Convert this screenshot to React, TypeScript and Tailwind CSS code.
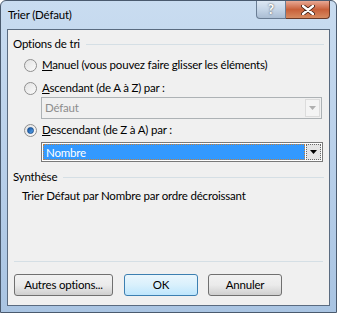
import React from "react";

function Radio({ checked }: { checked?: boolean }) {
  return (
    <span className="relative w-[13px] h-[13px] rounded-full border border-[#8f8f8f] bg-gradient-to-br from-[#e2e2e2] to-[#fbfbfb] flex items-center justify-center shrink-0">
      {checked && <span className="w-[7px] h-[7px] rounded-full bg-gradient-to-br from-[#0f4e9b] to-[#5aa8f0] border border-[#1b4f8f]" />}
    </span>
  );
}

function Btn({ children, primary }: { children: React.ReactNode; primary?: boolean }) {
  return (
    <div
      className={
        "h-[22px] flex items-center justify-center rounded-[3px] border " +
        (primary
          ? "border-[#3c7fb1] bg-gradient-to-b from-[#eaf6fd] via-[#d9f0fc] to-[#bee6fd]"
          : "border-[#707070] bg-gradient-to-b from-[#f2f2f2] via-[#ebebeb] to-[#cfcfcf]")
      }
    >
      {children}
    </div>
  );
}

export default function App() {
  return (
    <div
      className="w-[337px] h-[313px] relative overflow-hidden text-[11.5px] tracking-[-0.2px] text-black"
      style={{ fontFamily: 'Lato, "Noto Sans", sans-serif' }}
    >
      <div className="absolute inset-0 rounded-t-[6px] border border-[#4a5a6e] bg-gradient-to-b from-[#c9dcf0] via-[#b9d0ea] to-[#a9c4e2] flex flex-col">
        {/* title bar */}
        <div className="h-[28px] flex items-start">
          <span className="ml-[7px] mt-[6px] leading-[16px] text-black">Trier (Défaut)</span>
          <div className="ml-auto mr-[6px] flex">
            <div className="w-[30px] h-[18px] border border-[#6a7d94] border-t-0 rounded-bl-[4px] bg-gradient-to-b from-[#dce7f3] via-[#c5d5e7] to-[#aabdd3] flex items-center justify-center text-white font-bold text-[13px] leading-none" style={{ textShadow: "0 0 2px #333" }}>
              ?
            </div>
            <div className="w-[44px] h-[18px] border border-[#6a3a28] border-t-0 border-l-0 rounded-br-[4px] bg-gradient-to-b from-[#e8a894] via-[#c8603a] to-[#d68a60] flex items-center justify-center">
              <svg width="14" height="10" viewBox="0 0 14 10">
                <path d="M2 1 L12 9 M12 1 L2 9" stroke="#3a1a10" strokeWidth="4" strokeLinecap="round" />
                <path d="M2 1 L12 9 M12 1 L2 9" stroke="#fff" strokeWidth="2.4" strokeLinecap="round" />
              </svg>
            </div>
          </div>
        </div>
        {/* client */}
        <div className="mx-[6px] mb-[6px] flex-1 bg-[#f0f0f0] border border-[#5a6b80] flex flex-col px-[5px]">
          <div className="flex items-center mt-[6px] h-[16px]">
            <span>Options de tri</span>
            <div className="flex-1 ml-[6px] h-px bg-[#d5dfe5]" />
          </div>
          <div className="flex items-center gap-[5px] ml-[11px] mt-[5px] h-[16px]">
            <Radio />
            <span><u>M</u>anuel (vous pouvez faire glisser les éléments)</span>
          </div>
          <div className="flex items-center gap-[5px] ml-[11px] mt-[7px] h-[16px]">
            <Radio />
            <span><u>A</u>scendant (de A à Z) par :</span>
          </div>
          <div className="ml-[28px] mr-[2px] mt-[1px] h-[22px] border border-[#adb2b5] bg-[#f0f0f0] flex">
            <span className="flex-1 pl-[3px] leading-[20px] text-[#8d8d8d]">Défaut</span>
            <div className="w-[15px] my-[1px] mr-[1px] bg-[#f4f4f4] border border-[#dcdcdc] flex items-center justify-center">
              <svg width="7" height="4" viewBox="0 0 7 4"><path d="M0 0 H7 L3.5 4 Z" fill="#b0b0b0" /></svg>
            </div>
          </div>
          <div className="flex items-center gap-[5px] ml-[11px] mt-[3px] h-[16px]">
            <Radio checked />
            <span><u>D</u>escendant (de Z à A) par :</span>
          </div>
          <div className="ml-[28px] mr-[1px] mt-[4px] h-[20px] border border-[#7a7a7a] bg-white flex p-px">
            <span className="flex-1 pl-[2px] leading-[16px] bg-[#3399ff] text-white border border-dotted border-[#c08040]">Nombre</span>
            <div className="w-[15px] ml-[1px] bg-[#e4e4e4] border border-dotted border-[#6a6a6a] flex items-center justify-center">
              <svg width="7" height="4" viewBox="0 0 7 4"><path d="M0 0 H7 L3.5 4 Z" fill="#000" /></svg>
            </div>
          </div>
          <div className="flex items-center mt-[7px] h-[16px]">
            <span>Synthèse</span>
            <div className="flex-1 ml-[6px] h-px bg-[#d5dfe5]" />
          </div>
          <div className="ml-[9px] mt-[3px] h-[16px] leading-[16px]">Trier Défaut par Nombre par ordre décroissant</div>
          <div className="flex-1" />
          <div className="h-px bg-[#d5dfe5] mx-[1px]" />
          <div className="flex mt-[12px] mb-[9px] ml-[1px] gap-[10px]">
            <div className="w-[99px]"><Btn>Autres options...</Btn></div>
            <div className="w-[74px] ml-px"><Btn primary>OK</Btn></div>
            <div className="w-[74px]"><Btn>Annuler</Btn></div>
          </div>
        </div>
      </div>
    </div>
  );
}
